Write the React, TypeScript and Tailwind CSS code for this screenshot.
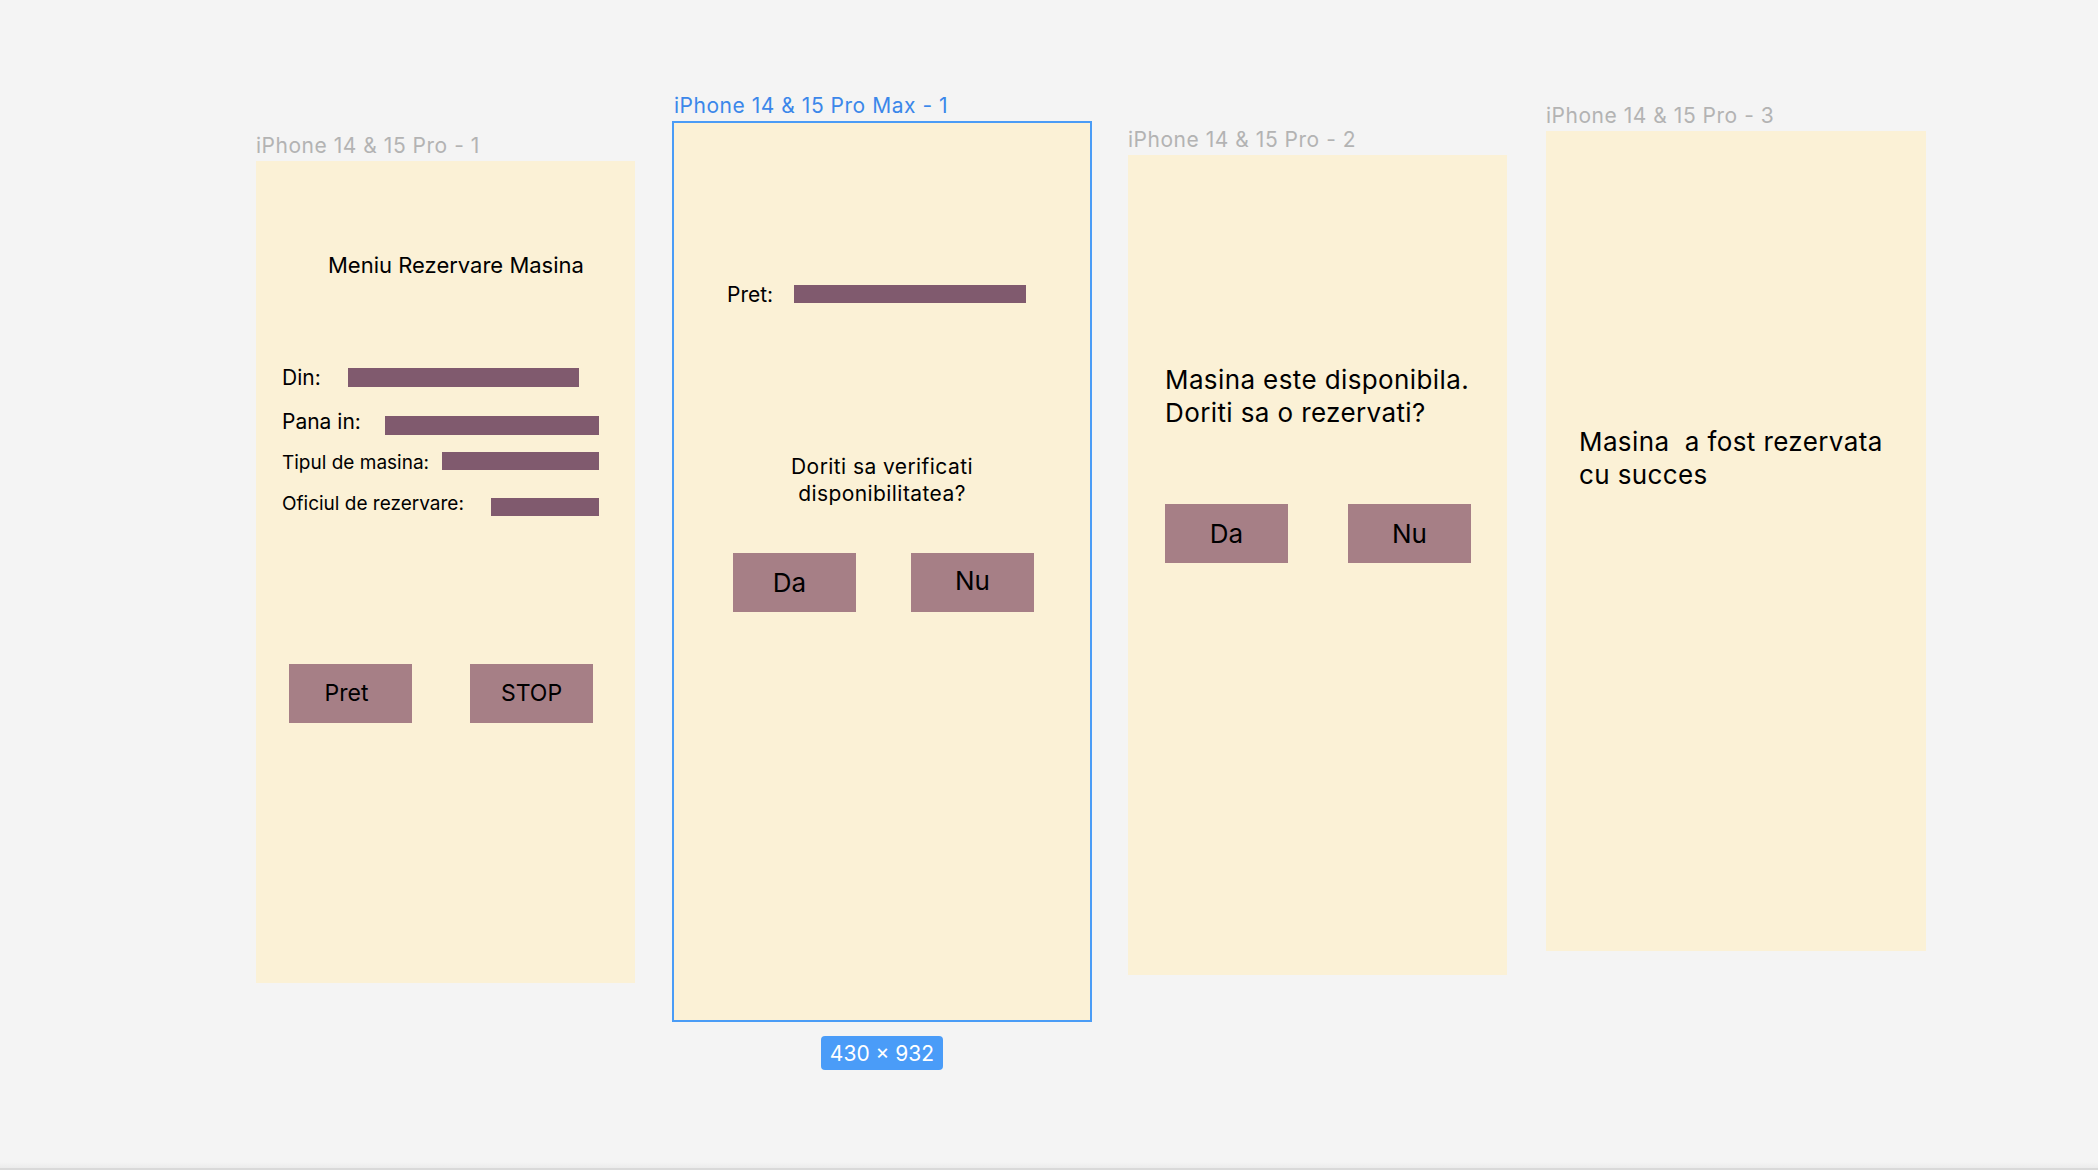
import type { ReactNode } from "react";

const FONT = "font-['Inter','Noto_Sans',sans-serif]";

function Frame({
    label,
    pos,
    box,
    labelClass,
    children,
}: {
    label: string;
    pos: string;
    box: string;
    labelClass?: string;
    children?: ReactNode;
}) {
    return (
        <div className={`absolute flex flex-col ${pos}`}>
            <div className={`text-[21px] leading-none tracking-[0.025em] mb-[5px] whitespace-nowrap ${labelClass || "text-[#b3b3b3]"}`}>
                {label}
            </div>
            <div className={`bg-[#fbf1d6] flex flex-col ${box}`}>{children}</div>
        </div>
    );
}

function Bar({ w, h = "h-[19px]" }: { w: string; h?: string }) {
    return <div className={`bg-[#805a6e] ${w} ${h}`} />;
}

function Btn({ children, text = "text-[23px]", extra = "" }: { children: ReactNode; text?: string; extra?: string }) {
    return (
        <div className={`w-[123px] h-[59px] bg-[#a67f86] flex items-center justify-center text-black leading-none ${text} ${extra}`}>
            {children}
        </div>
    );
}

export default function App() {
    return (
        <div className={`h-[1170px] w-full flex flex-col bg-[#f4f4f4] ${FONT}`}>
            <div className="relative flex-1 overflow-hidden">
                {/* Frame 1 - meniu */}
                <Frame label="iPhone 14 & 15 Pro - 1" pos="left-[256px] top-[135px]" box="w-[379px] h-[822px]">
                    <div className="mt-[93px] ml-[72px] text-[22px] leading-none text-black">Meniu Rezervare Masina</div>

                    <div className="mt-[92px] ml-[26px] flex items-center h-[19px]">
                        <span className="w-[66px] text-[21px] leading-none">Din:</span>
                        <Bar w="w-[231px]" />
                    </div>
                    <div className="mt-[29px] ml-[26px] flex items-center h-[19px]">
                        <span className="w-[103px] text-[21px] leading-none -translate-y-[4px]">Pana in:</span>
                        <Bar w="w-[214px]" />
                    </div>
                    <div className="mt-[17px] ml-[26px] flex items-center h-[18px]">
                        <span className="w-[160px] text-[19px] leading-none translate-y-[1px]">Tipul de masina:</span>
                        <Bar w="w-[157px]" h="h-[18px]" />
                    </div>
                    <div className="mt-[28px] ml-[26px] flex items-center h-[18px]">
                        <span className="w-[209px] text-[19px] leading-none -translate-y-[4px]">Oficiul de rezervare:</span>
                        <Bar w="w-[108px]" h="h-[18px]" />
                    </div>

                    <div className="mt-[148px] ml-[33px] flex gap-[58px]">
                        <Btn extra="pr-[8px]">Pret</Btn>
                        <Btn>STOP</Btn>
                    </div>
                </Frame>

                {/* Frame 2 - selected, with size badge */}
                <div className="absolute left-[672px] top-[95px] flex flex-col items-center">
                    <div className="self-start ml-[2px] text-[21px] leading-none tracking-[0.025em] mb-[5px] text-[#3b87ea] whitespace-nowrap">
                        iPhone 14 & 15 Pro Max - 1
                    </div>
                    <div className="w-[420px] h-[901px] bg-[#fbf1d6] border-2 border-[#4a9cf6] flex flex-col">
                        <div className="mt-[162px] ml-[53px] flex items-center h-[18px]">
                            <span className="w-[67px] text-[21px] leading-none">Pret:</span>
                            <Bar w="w-[232px]" h="h-[18px]" />
                        </div>
                        <div className="mt-[150px] text-center text-[21px] leading-[27px] tracking-[0.02em] text-black">
                            Doriti sa verificati
                            <br />
                            disponibilitatea?
                        </div>
                        <div className="mt-[46px] ml-[59px] flex gap-[55px]">
                            <Btn text="text-[26px]" extra="pr-[10px]">Da</Btn>
                            <Btn text="text-[26px]" extra="pb-[4px]">Nu</Btn>
                        </div>
                    </div>
                    <div className="mt-[14px] h-[34px] px-[9px] rounded-[4px] bg-[#4a9cf8] text-white text-[21px] leading-none flex items-center">
                        430 × 932
                    </div>
                </div>

                {/* Frame 3 - disponibila */}
                <Frame label="iPhone 14 & 15 Pro - 2" pos="left-[1128px] top-[129px]" box="w-[379px] h-[820px]">
                    <div className="mt-[208px] ml-[37px] text-[26px] leading-[33px] tracking-[0.015em] text-black">
                        Masina este disponibila.
                        <br />
                        Doriti sa o rezervati?
                    </div>
                    <div className="mt-[75px] ml-[37px] flex gap-[60px]">
                        <Btn text="text-[26px]">Da</Btn>
                        <Btn text="text-[26px]">Nu</Btn>
                    </div>
                </Frame>

                {/* Frame 4 - succes */}
                <Frame label="iPhone 14 & 15 Pro - 3" pos="left-[1546px] top-[105px]" box="w-[380px] h-[820px]">
                    <div className="mt-[294px] ml-[33px] text-[26px] leading-[33px] tracking-[0.015em] text-black whitespace-pre">
                        {"Masina  a fost rezervata\ncu succes"}
                    </div>
                </Frame>
            </div>
            <div className="h-[6px] bg-gradient-to-b from-[#f4f4f4] to-[#ebebeb]" />
            <div className="h-[2px] bg-[#d9d9d9]" />
        </div>
    );
}
